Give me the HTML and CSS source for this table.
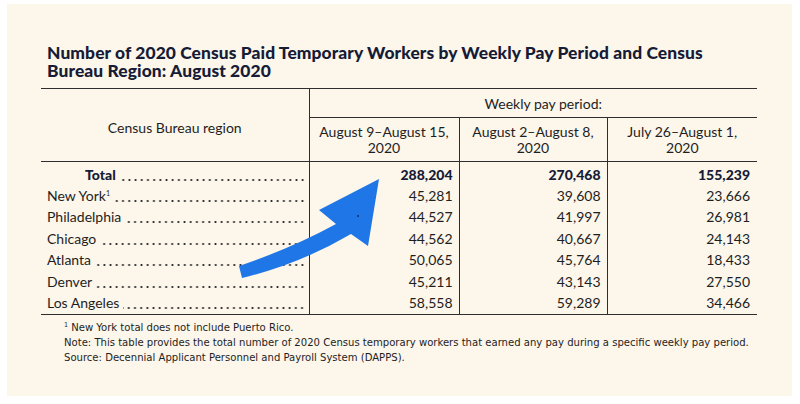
FILE: index.html
```html
<!DOCTYPE html>
<html>
<head>
<meta charset="utf-8">
<link rel="stylesheet" href="styles.css">
</head>
<body>
<div class="panel">
  <h1 class="title">Number of 2020 Census Paid Temporary Workers by Weekly Pay Period and Census Bureau Region: August 2020</h1>
  <div class="table-wrap">
    <table class="data">
      <colgroup>
        <col class="c1"><col class="c2"><col class="c3"><col class="c4">
      </colgroup>
      <thead>
        <tr class="h1">
          <th rowspan="2" class="region-head">Census Bureau region</th>
          <th colspan="3" class="period-head">Weekly pay period:</th>
        </tr>
        <tr class="h2">
          <th class="col-head">August 9–August 15,<br>2020</th>
          <th class="col-head">August 2–August 8,<br>2020</th>
          <th class="col-head last">July 26–August 1,<br>2020</th>
        </tr>
      </thead>
      <tbody>
        <tr class="total first">
          <td class="label"><span class="name total-name">Total</span><span class="leader"></span></td>
          <td class="num">288,204</td><td class="num">270,468</td><td class="num last">155,239</td>
        </tr>
        <tr>
          <td class="label"><span class="name">New York<sup>1</sup></span><span class="leader"></span></td>
          <td class="num">45,281</td><td class="num">39,608</td><td class="num last">23,666</td>
        </tr>
        <tr>
          <td class="label"><span class="name">Philadelphia</span><span class="leader"></span></td>
          <td class="num">44,527</td><td class="num">41,997</td><td class="num last">26,981</td>
        </tr>
        <tr>
          <td class="label"><span class="name">Chicago</span><span class="leader"></span></td>
          <td class="num">44,562</td><td class="num">40,667</td><td class="num last">24,143</td>
        </tr>
        <tr>
          <td class="label"><span class="name">Atlanta</span><span class="leader"></span></td>
          <td class="num">50,065</td><td class="num">45,764</td><td class="num last">18,433</td>
        </tr>
        <tr>
          <td class="label"><span class="name">Denver</span><span class="leader"></span></td>
          <td class="num">45,211</td><td class="num">43,143</td><td class="num last">27,550</td>
        </tr>
        <tr class="lastrow">
          <td class="label"><span class="name">Los Angeles</span><span class="leader"></span></td>
          <td class="num">58,558</td><td class="num">59,289</td><td class="num last">34,466</td>
        </tr>
      </tbody>
    </table>
    <svg class="arrow" width="160" height="120" viewBox="220 160 160 120" xmlns="http://www.w3.org/2000/svg">
      <path d="M239 268 Q 292 250 336 226 L 319 212 L 379 181 L 368 248 L 351 236 Q 300 266 242 280 Z" fill="#1f76e6"/>
      <circle cx="358" cy="218" r="1" fill="#1b2a55"/>
    </svg>
  </div>
  <div class="notes">
    <p><sup>1</sup> New York total does not include Puerto Rico.</p>
    <p>Note: This table provides the total number of 2020 Census temporary workers that earned any pay during a specific weekly pay period.</p>
    <p>Source: Decennial Applicant Personnel and Payroll System (DAPPS).</p>
  </div>
</div>
</body>
</html>
```
FILE: styles.css
```css
html, body {
  margin: 0;
  padding: 0;
  background: #ffffff;
}
body {
  width: 800px;
  height: 404px;
  overflow: hidden;
  font-family: Lato, "Open Sans", sans-serif;
  color: #1d1d1f;
}
.panel {
  margin: 4px 8px 0 7px;
  height: 392px;
  box-sizing: border-box;
  background: #fcf6eb;
  padding: 40px 0 0 34px;
}
.title {
  margin: 0 0 0 6px;
  width: 690px;
  font-size: 17.4px;
  line-height: 18px;
  font-weight: 900;
  color: #161b36;
  letter-spacing: 0.1px;
}
.table-wrap {
  position: relative;
  margin-top: 8px;
  width: 716px;
}
.data {
  border-collapse: collapse;
  width: 716px;
  table-layout: fixed;
  font-size: 14px;
  color: #1e1e1e;
}
.c1 { width: 268px; }
.c2 { width: 150px; }
.c3 { width: 148px; }
.c4 { width: 150px; }
.data thead tr.h1 th { border-top: 1.5px solid #2e2e2e; }
.data th {
  font-weight: 400;
  padding: 0;
}
.region-head {
  border-right: 1.5px solid #2e2e2e;
  border-bottom: 1.5px solid #2e2e2e;
  text-align: center;
  vertical-align: middle;
  padding-top: 4px !important;
}
.period-head {
  height: 28px;
  border-bottom: 1.5px solid #2e2e2e;
  text-align: center;
  vertical-align: middle;
  padding-left: 20px !important;
}
.col-head {
  height: 43px;
  line-height: 16px;
  text-align: center;
  vertical-align: middle;
  border-right: 1.5px solid #2e2e2e;
  border-bottom: 1.5px solid #2e2e2e;
}
.col-head.last { border-right: none; }
.data td {
  height: 21.4px;
  padding: 0;
  line-height: 16px;
  vertical-align: middle;
}
.data tr.first td { padding-top: 2px; }
.data tr.lastrow td { border-bottom: 1.5px solid #2e2e2e; padding-bottom: 0; }
.label {
  border-right: 1.5px solid #2e2e2e;
  padding-left: 6px !important;
}
.label .name {
  float: left;
  padding-right: 4px;
}
.label .leader {
  display: block;
  overflow: hidden;
  height: 14px;
  margin-right: 3px;
  background-image: radial-gradient(circle, #2a2a2a 0.8px, transparent 1.2px);
  background-size: 6.2px 4px;
  background-repeat: repeat-x;
  background-position: right 11px;
}
.total-name {
  font-weight: 900;
  color: #161b36;
  margin-left: 38px;
}
.label sup {
  font-size: 7px;
  vertical-align: 5px;
  line-height: 0;
}
.num {
  text-align: right;
  padding-right: 6px !important;
  border-right: 1.5px solid #2e2e2e;
}
.num.last {
  border-right: none;
  padding-right: 7px !important;
}
tr.total .num {
  font-weight: 900;
  color: #161b36;
}
.arrow {
  position: absolute;
  left: 179px;
  top: 70px;
}
.notes {
  margin: 5px 0 0 23px;
  font-family: "Liberation Sans Narrow", "DejaVu Sans Condensed", "Roboto Condensed", sans-serif;
  font-stretch: condensed;
  font-size: 11.2px;
  line-height: 15px;
  color: #1e1e1e;
}
.notes p { margin: 0; }
.notes sup {
  font-size: 7px;
  vertical-align: 4px;
  line-height: 0;
}
```
